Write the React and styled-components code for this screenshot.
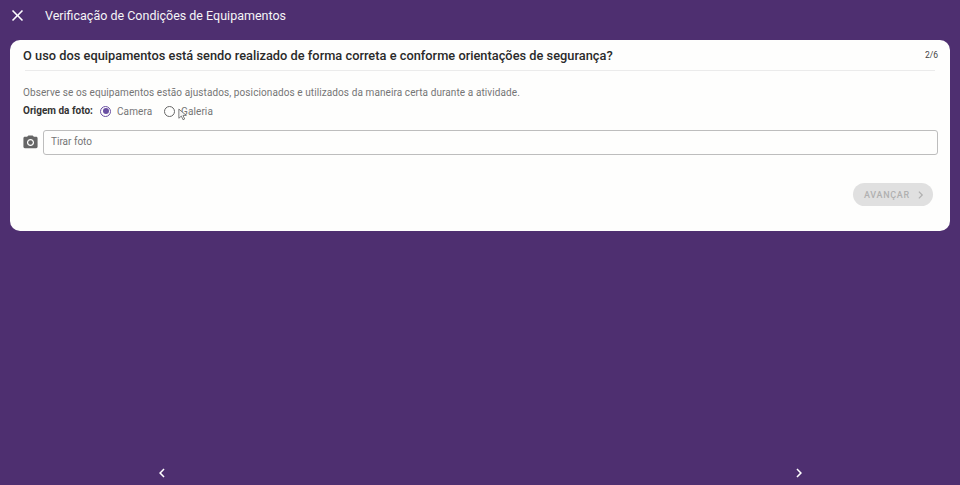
import { createGlobalStyle, styled } from 'styled-components';

const GlobalStyle = createGlobalStyle`
  html, body {
    margin: 0;
    padding: 0;
    height: 100%;
    background-color: #4e2f70;
  }
  * {
    box-sizing: border-box;
  }
`;

const App = () => {
  return (
    <Page>
      <GlobalStyle />
      <TopBar>
        <IconButton aria-label="fechar">
          <svg width="19" height="19" viewBox="0 0 24 24" fill="#fff">
            <path d="M19 6.41 17.59 5 12 10.59 6.41 5 5 6.41 10.59 12 5 17.59 6.41 19 12 13.41 17.59 19 19 17.59 13.41 12z" />
          </svg>
        </IconButton>
        <TopTitle>Verificação de Condições de Equipamentos</TopTitle>
      </TopBar>

      <Card>
        <CardHeader>
          <Question>O uso dos equipamentos está sendo realizado de forma correta e conforme orientações de segurança?</Question>
          <Counter>2/6</Counter>
        </CardHeader>
        <Divider />
        <Hint>Observe se os equipamentos estão ajustados, posicionados e utilizados da maneira certa durante a atividade.</Hint>
        <OriginRow>
          <OriginLabel>Origem da foto:</OriginLabel>
          <RadioOption>
            <RadioCircle $checked />
            <RadioText>Camera</RadioText>
          </RadioOption>
          <RadioOption>
            <RadioCircle />
            <RadioText>Galeria</RadioText>
            <Cursor width="10" height="13" viewBox="0 0 12 15">
              <path d="M1 1v11l3-2.6 2 4.4 2-.9-2-4.3h4z" fill="#f6f6f6" stroke="#666" strokeWidth="1" />
            </Cursor>
          </RadioOption>
        </OriginRow>
        <PhotoRow>
          <PhotoIcon width="17" height="17" viewBox="0 0 24 24" fill="#666">
            <circle cx="12" cy="12" r="3.2" />
            <path d="M9 2 7.17 4H4c-1.1 0-2 .9-2 2v12c0 1.1.9 2 2 2h16c1.1 0 2-.9 2-2V6c0-1.1-.9-2-2-2h-3.17L15 2H9zm3 15c-2.76 0-5-2.24-5-5s2.24-5 5-5 5 2.24 5 5-2.24 5-5 5z" />
          </PhotoIcon>
          <PhotoField>Tirar foto</PhotoField>
        </PhotoRow>
        <Actions>
          <NextButton disabled>
            AVANÇAR
            <svg width="16" height="16" viewBox="0 0 24 24" fill="#b0b0b0">
              <path d="M10 6 8.59 7.41 13.17 12l-4.58 4.59L10 18l6-6z" />
            </svg>
          </NextButton>
        </Actions>
      </Card>

      <Pager>
        <PagerArrow aria-label="anterior">
          <svg width="18" height="18" viewBox="0 0 24 24" fill="#fff">
            <path d="M15.41 7.41 14 6l-6 6 6 6 1.41-1.41L10.83 12z" />
          </svg>
        </PagerArrow>
        <PagerArrow aria-label="próximo">
          <svg width="18" height="18" viewBox="0 0 24 24" fill="#fff">
            <path d="M10 6 8.59 7.41 13.17 12l-4.58 4.59L10 18l6-6z" />
          </svg>
        </PagerArrow>
      </Pager>
    </Page>
  );
};

export default App;

const Page = styled.div`
  display: flex;
  flex-direction: column;
  width: 960px;
  height: 485px;
  overflow: hidden;
  background-color: #4e2f70;
  font-family: Roboto, 'Liberation Sans', sans-serif;
`;

const TopBar = styled.div`
  display: flex;
  align-items: center;
  height: 30px;
  padding-left: 8px;
  flex-shrink: 0;
`;

const IconButton = styled.button`
  display: flex;
  padding: 0;
  border: 0;
  background: none;
`;

const TopTitle = styled.div`
  margin-left: 18px;
  color: #fff;
  font-size: 12.5px;
  opacity: 0.95;
`;

const Card = styled.div`
  display: flex;
  flex-direction: column;
  height: 191px;
  margin: 10px 10px 0;
  padding: 0 12px 0 13px;
  background-color: #fefefd;
  border-radius: 10px;
`;

const CardHeader = styled.div`
  display: flex;
  align-items: flex-start;
  justify-content: space-between;
  height: 30px;
  padding-top: 7px;
`;

const Question = styled.div`
  color: #2a2a2a;
  font-size: 12.8px;
  font-weight: 500;
  line-height: 17px;
  letter-spacing: 0.015px;
`;

const Counter = styled.div`
  margin-top: 3px;
  color: #444;
  font-size: 8.5px;
  line-height: 11px;
`;

const Divider = styled.div`
  height: 1px;
  margin: 0 3px 0 2px;
  background-color: #ebebeb;
`;

const Hint = styled.div`
  margin-top: 15px;
  color: #757575;
  font-size: 10px;
  line-height: 13px;
  letter-spacing: 0.09px;
`;

const OriginRow = styled.div`
  display: flex;
  align-items: center;
  height: 20px;
  margin-top: 2px;
`;

const OriginLabel = styled.div`
  width: 77px;
  margin-top: -2px;
  color: #333;
  font-size: 10px;
  font-weight: 700;
`;

const RadioOption = styled.div`
  position: relative;
  display: flex;
  align-items: center;
  width: 64px;
`;

const RadioCircle = styled.span`
  display: flex;
  align-items: center;
  justify-content: center;
  width: 11px;
  height: 11px;
  border: 1px solid ${({ $checked }) => ($checked ? '#6a4fa3' : '#666')};
  border-radius: 50%;
  &::after {
    content: '';
    display: ${({ $checked }) => ($checked ? 'block' : 'none')};
    width: 6px;
    height: 6px;
    background-color: #6a4fa3;
    border-radius: 50%;
  }
`;

const RadioText = styled.span`
  margin-left: 6px;
  color: #757575;
  font-size: 10px;
  letter-spacing: 0.1px;
`;

const Cursor = styled.svg`
  position: absolute;
  left: 14px;
  top: 2px;
`;

const PhotoRow = styled.div`
  display: flex;
  align-items: center;
  gap: 4px;
  margin-top: 9px;
`;

const PhotoIcon = styled.svg`
  margin-left: -1px;
`;

const PhotoField = styled.div`
  flex: 1;
  height: 25px;
  padding-left: 7px;
  color: #757575;
  font-size: 10px;
  line-height: 22px;
  border: 1px solid #bdbdbd;
  border-radius: 3px;
`;

const Actions = styled.div`
  display: flex;
  justify-content: flex-end;
  margin-top: 28px;
  padding-right: 5px;
`;

const NextButton = styled.button`
  display: flex;
  align-items: center;
  gap: 3px;
  width: 80px;
  height: 23px;
  padding: 0 5px 0 11px;
  color: #b0b0b0;
  font-family: inherit;
  font-size: 9px;
  font-weight: 500;
  letter-spacing: 0.7px;
  background-color: #e0e0e0;
  border: 0;
  border-radius: 12px;
`;

const Pager = styled.div`
  display: flex;
  justify-content: space-between;
  margin-top: auto;
  padding: 0 152px 3px 153px;
`;

const PagerArrow = styled.button`
  display: flex;
  padding: 0;
  border: 0;
  background: none;
`;
